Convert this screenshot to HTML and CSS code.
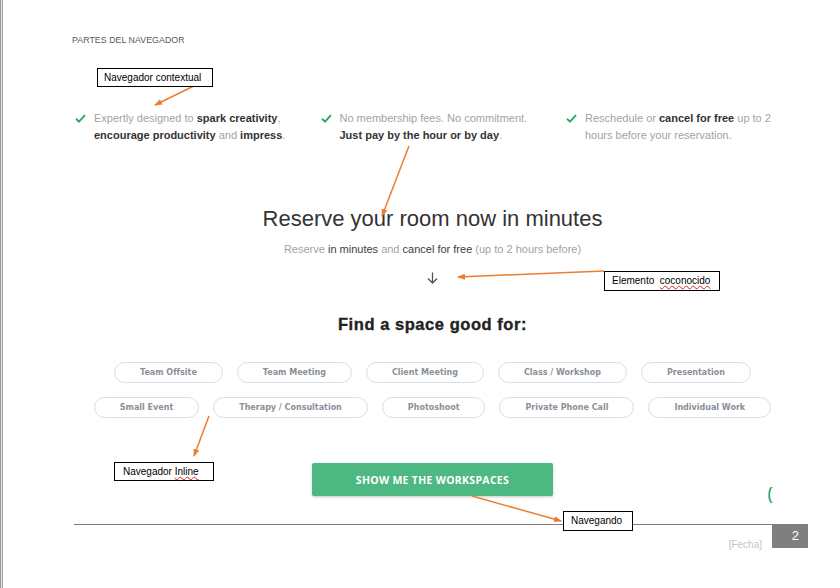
FILE: index.html
```html
<!DOCTYPE html>
<html lang="es">
<head>
<meta charset="utf-8">
<title>Partes del navegador</title>
<link rel="stylesheet" href="styles.css">
</head>
<body>
<div class="page">
  <header class="doc-header">PARTES DEL NAVEGADOR</header>

  <main class="content">
    <ul class="features">
      <li class="feature">
        <svg class="check" viewBox="0 0 11 9" width="11" height="9"><path d="M1 4.8 L4 7.6 L10 1.2" fill="none" stroke="#2aa862" stroke-width="1.9"/></svg>
        <p>Expertly designed to <b>spark creativity</b>, <b>encourage productivity</b> and <b>impress</b>.</p>
      </li>
      <li class="feature">
        <svg class="check" viewBox="0 0 11 9" width="11" height="9"><path d="M1 4.8 L4 7.6 L10 1.2" fill="none" stroke="#2aa862" stroke-width="1.9"/></svg>
        <p>No membership fees. No commitment. <b>Just pay by the hour or by day</b>.</p>
      </li>
      <li class="feature">
        <svg class="check" viewBox="0 0 11 9" width="11" height="9"><path d="M1 4.8 L4 7.6 L10 1.2" fill="none" stroke="#2aa862" stroke-width="1.9"/></svg>
        <p>Reschedule or <b>cancel for free</b> up to 2 hours before your reservation.</p>
      </li>
    </ul>

    <h1 class="title">Reserve your room now in minutes</h1>
    <p class="subtitle">Reserve <span class="dark">in minutes</span> and <span class="dark">cancel for free</span> (up to 2 hours before)</p>
    <svg class="down-arrow" viewBox="0 0 11 12" width="11" height="12"><path d="M5.5 0.5 V11 M1 6.5 L5.5 11 L10 6.5" fill="none" stroke="#555" stroke-width="1.3"/></svg>

    <h2 class="find">Find a space good for:</h2>

    <div class="pills">
      <div class="pill-row">
        <span class="pill">Team Offsite</span>
        <span class="pill">Team Meeting</span>
        <span class="pill">Client Meeting</span>
        <span class="pill">Class / Workshop</span>
        <span class="pill">Presentation</span>
      </div>
      <div class="pill-row">
        <span class="pill">Small Event</span>
        <span class="pill">Therapy / Consultation</span>
        <span class="pill">Photoshoot</span>
        <span class="pill">Private Phone Call</span>
        <span class="pill">Individual Work</span>
      </div>
    </div>

    <button class="cta" type="button">SHOW ME THE WORKSPACES</button>
  </main>

  <footer class="doc-footer">
    <div class="footer-rule"><span class="fecha">[Fecha]</span></div>
    <div class="page-num">2</div>
  </footer>

  <svg class="chat-widget" viewBox="0 0 5 16" width="5" height="16"><path d="M4.8 0 C1.2 2.5 1.2 13.5 4.8 16 L2.6 16 C-0.4 13 -0.4 3 2.6 0 Z" fill="#2aa862"/></svg>

  <svg class="arrows" viewBox="0 0 840 588" width="840" height="588">
    <defs>
      <marker id="head" markerWidth="8" markerHeight="6" refX="7" refY="3" orient="auto" markerUnits="userSpaceOnUse">
        <path d="M0 0 L8 3 L0 6 Z" fill="#ed7d31"/>
      </marker>
    </defs>
    <g stroke="#ed7d31" stroke-width="1.5" fill="none" marker-end="url(#head)">
      <line x1="202" y1="82" x2="155" y2="105"/>
      <line x1="409" y1="146" x2="382" y2="216"/>
      <line x1="604" y1="271" x2="458" y2="277"/>
      <line x1="209" y1="416" x2="194" y2="456"/>
      <line x1="472" y1="496" x2="561" y2="521"/>
    </g>
  </svg>

  <div class="note note-contextual">Navegador contextual</div>
  <div class="note note-unknown">Elemento&nbsp; <span class="squiggle">coconocido</span></div>
  <div class="note note-inline">Navegador <span class="squiggle">Inline</span></div>
  <div class="note note-nav">Navegando</div>
</div>
</body>
</html>
```

FILE: styles.css
```css
* { box-sizing: border-box; }

html, body {
  margin: 0;
  padding: 0;
}

body {
  width: 840px;
  height: 588px;
  overflow: hidden;
  background: #ffffff;
  font-family: "Liberation Sans", Arial, sans-serif;
}

.page {
  position: relative;
  width: 840px;
  height: 588px;
  overflow: hidden;
  background: linear-gradient(to right, #9a9a9a 0 1px, #e4e4e4 1px 2px, #a8a8a8 2px 3px, #ffffff 3px);
  padding-top: 34px;
}

.doc-header {
  margin-left: 72px;
  font-size: 8.8px;
  line-height: 12px;
  color: #595959;
  letter-spacing: 0.05px;
}

.content {
  margin-left: 74px;
  width: 717px;
}

.features {
  list-style: none;
  margin: 64px 0 0 1px;
  padding: 0;
  display: grid;
  grid-template-columns: repeat(3, 245.5px);
}

.feature {
  display: flex;
  align-items: flex-start;
  gap: 8px;
}

.check {
  flex: none;
  margin-top: 4px;
}

.feature p {
  margin: 0;
  width: 198px;
  font-size: 11px;
  line-height: 17px;
  color: #9ea3a9;
}

.feature b {
  color: #333333;
  font-weight: bold;
}

.title {
  margin: 62px 0 0;
  font-size: 22px;
  line-height: 26px;
  font-weight: normal;
  color: #333333;
  text-align: center;
}

.subtitle {
  margin: 9px 0 0;
  font-size: 11px;
  line-height: 16px;
  color: #9ea3a9;
  text-align: center;
}

.subtitle .dark {
  color: #3d3d3d;
}

.down-arrow {
  display: block;
  margin: 15px auto 0;
}

.find {
  margin: 30px 0 0;
  font-size: 16.5px;
  line-height: 20px;
  font-weight: bold;
  letter-spacing: 0.55px;
  color: #222222;
  text-align: center;
  -webkit-text-stroke: 0.35px #222222;
}

.pills {
  margin-top: 28px;
  display: flex;
  flex-direction: column;
  gap: 14px;
}

.pill-row {
  display: flex;
  justify-content: center;
  gap: 14px;
}

.pill {
  display: block;
  height: 21px;
  padding: 0 25px;
  border: 1px solid #dadde1;
  border-radius: 11px;
  background: #ffffff;
  font-family: "DejaVu Sans", "Liberation Sans", sans-serif;
  font-size: 8px;
  line-height: 19px;
  font-weight: bold;
  color: #8a9098;
  white-space: nowrap;
}

.cta {
  display: block;
  width: 241px;
  height: 33px;
  margin: 45px auto 0;
  padding: 0;
  border: none;
  border-radius: 2px;
  background: #4db882;
  box-shadow: 0 1px 3px rgba(0, 0, 0, 0.22);
  color: #ffffff;
  font-family: "Open Sans", "Liberation Sans", sans-serif;
  font-size: 10.5px;
  font-weight: bold;
  letter-spacing: 0.3px;
}

.doc-footer {
  display: flex;
  margin: 28px 0 0 74px;
  width: 734px;
  height: 24px;
}

.footer-rule {
  flex: 1;
  border-top: 1px solid #7f7f7f;
  padding: 9px 10px 0 0;
  text-align: right;
}

.fecha {
  font-size: 10px;
  line-height: 13px;
  color: #c6c6c6;
}

.page-num {
  width: 36px;
  background: #7f7f7f;
  color: #ffffff;
  font-size: 13px;
  line-height: 24px;
  text-align: right;
  padding-right: 9px;
}

.chat-widget {
  position: absolute;
  left: 768px;
  top: 487px;
}

.arrows {
  position: absolute;
  left: 0;
  top: 0;
  pointer-events: none;
}

.note {
  position: absolute;
  height: 20px;
  border: 1px solid #000000;
  background: #ffffff;
  font-size: 10px;
  line-height: 17px;
  color: #000000;
  white-space: nowrap;
}

.note-contextual {
  left: 97px;
  top: 68px;
  width: 116px;
  height: 19px;
  padding-left: 6px;
}

.note-unknown {
  left: 604px;
  top: 271px;
  width: 116px;
  padding-left: 7px;
}

.note-inline {
  left: 114px;
  top: 462px;
  width: 100px;
  height: 19px;
  padding-left: 8px;
}

.note-nav {
  left: 563px;
  top: 511px;
  width: 70px;
  padding-left: 7px;
}

.squiggle {
  text-decoration: underline wavy #e02020;
  text-decoration-thickness: 1px;
  text-underline-offset: 1px;
  text-decoration-skip-ink: none;
}
```
